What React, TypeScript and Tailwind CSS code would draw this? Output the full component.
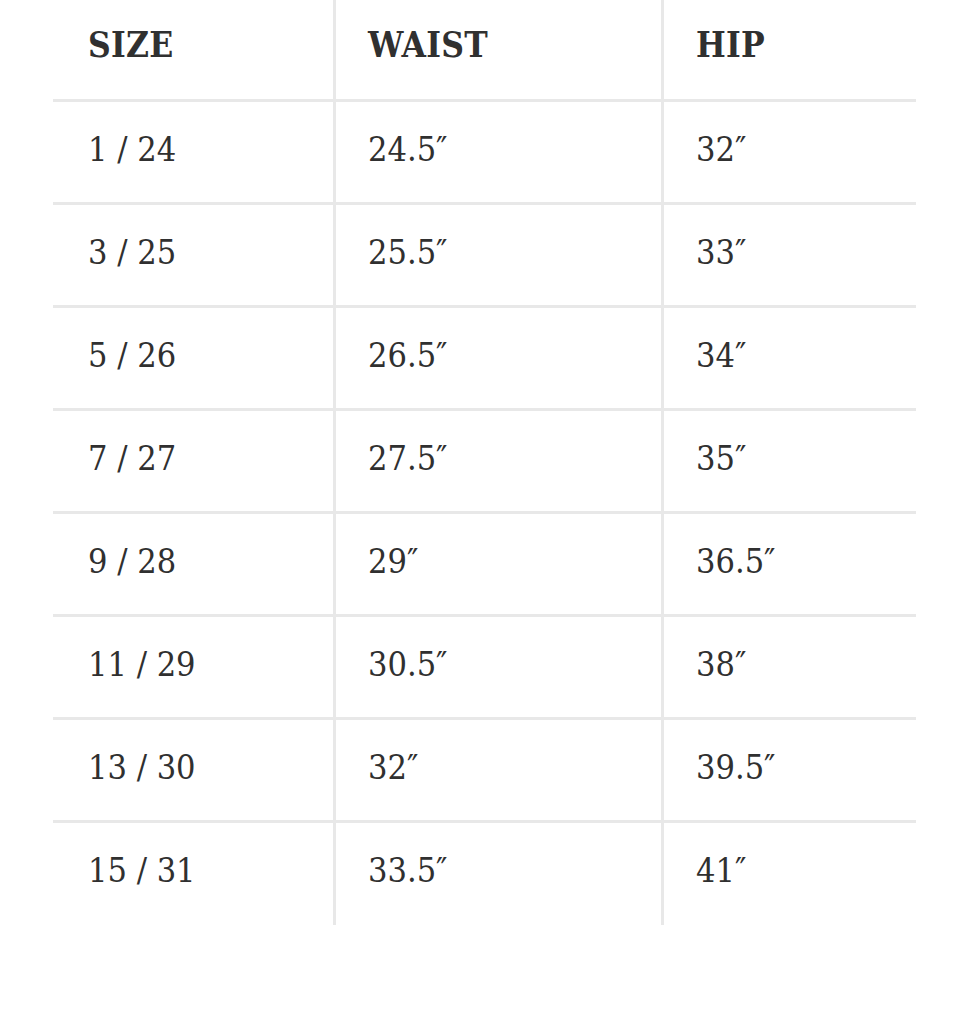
import React from "react";

const rows: [string, string, string][] = [
  ["1 / 24", "24.5″", "32″"],
  ["3 / 25", "25.5″", "33″"],
  ["5 / 26", "26.5″", "34″"],
  ["7 / 27", "27.5″", "35″"],
  ["9 / 28", "29″", "36.5″"],
  ["11 / 29", "30.5″", "38″"],
  ["13 / 30", "32″", "39.5″"],
  ["15 / 31", "33.5″", "41″"],
];

const font = { fontFamily: '"DejaVu Serif Condensed", "DejaVu Serif", serif' };

export default function App() {
  return (
    <div className="w-[970px] h-[1024px] bg-white text-[#303030]" style={font}>
      <div className="ml-[53px] w-[863px] flex flex-col">
        <div className="grid grid-cols-[283px_328px_252px] h-[102px] border-b-[3px] border-[#e8e8e8]">
          <div className="border-r-[3px] border-[#e8e8e8] pl-[35px] pt-[26px] text-[35px] font-bold leading-[38px] tracking-[0.3px]">SIZE</div>
          <div className="border-r-[3px] border-[#e8e8e8] pl-[32px] pt-[26px] text-[35px] font-bold leading-[38px] tracking-[0.3px]">WAIST</div>
          <div className="pl-[32px] pt-[26px] text-[35px] font-bold leading-[38px] tracking-[0.3px]">HIP</div>
        </div>
        {rows.map((r, i) => {
          const last = i === rows.length - 1;
          return (
            <div
              key={i}
              className={
                last
                  ? "grid grid-cols-[283px_328px_252px] h-[102px]"
                  : "grid grid-cols-[283px_328px_252px] h-[103px] border-b-[3px] border-[#e8e8e8]"
              }
            >
              <div className="border-r-[3px] border-[#e8e8e8] pl-[35px] pt-[28px] text-[34px] leading-[38px]">{r[0]}</div>
              <div className="border-r-[3px] border-[#e8e8e8] pl-[32px] pt-[28px] text-[34px] leading-[38px]">{r[1]}</div>
              <div className="pl-[32px] pt-[28px] text-[34px] leading-[38px]">{r[2]}</div>
            </div>
          );
        })}
      </div>
    </div>
  );
}
